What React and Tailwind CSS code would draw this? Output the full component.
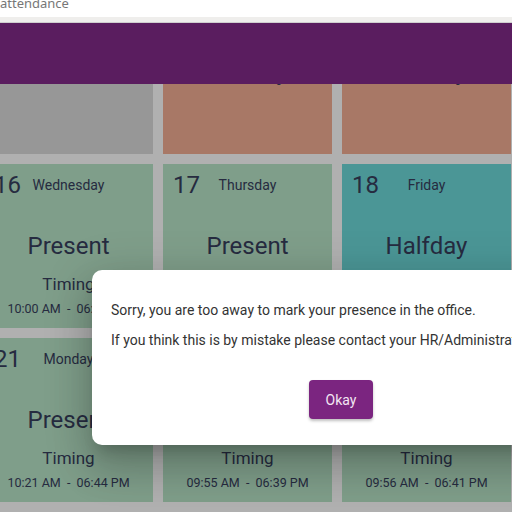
import React from "react";

const days = [
  { num: "11", day: "Friday", status: "Absent", bg: "bg-[#979797]", timing: false },
  { num: "12", day: "Saturday", status: "Holiday", bg: "bg-[#a87866]", timing: false },
  { num: "13", day: "Sunday", status: "Holiday", bg: "bg-[#a87866]", timing: false },
  { num: "16", day: "Wednesday", status: "Present", bg: "bg-[#7f9e8a]", timing: true, from: "10:00 AM", to: "06:42 PM" },
  { num: "17", day: "Thursday", status: "Present", bg: "bg-[#7f9e8a]", timing: true, from: "09:58 AM", to: "06:40 PM" },
  { num: "18", day: "Friday", status: "Halfday", bg: "bg-[#4b9696]", timing: true, from: "10:05 AM", to: "02:10 PM" },
  { num: "21", day: "Monday", status: "Present", bg: "bg-[#7f9e8a]", timing: true, from: "10:21 AM", to: "06:44 PM" },
  { num: "22", day: "Tuesday", status: "Present", bg: "bg-[#7f9e8a]", timing: true, from: "09:55 AM", to: "06:39 PM" },
  { num: "23", day: "Wednesday", status: "Present", bg: "bg-[#7f9e8a]", timing: true, from: "09:56 AM", to: "06:41 PM" },
];

const DayCard = ({ item }) => (
  <div className={`${item.bg} h-[164px] flex flex-col text-[#262b40]`}>
    <div className="grid grid-cols-[1fr_auto_1fr] items-center pt-[9px] h-[33px]">
      <span className="pl-[10px] text-[24px] leading-[24px]">{item.num}</span>
      <span className="text-[14px] leading-[22px]">{item.day}</span>
      <span />
    </div>
    <div className="mt-[34px] text-center text-[24px] leading-[30px]">{item.status}</div>
    {item.timing && (
      <>
        <div className="mt-[11px] text-center text-[17px] leading-[24px]">Timing</div>
        <div className="mt-[4px] text-center text-[12.5px] leading-[18px] whitespace-pre">
          {item.from}  -  {item.to}
        </div>
      </>
    )}
  </div>
);

const App = () => {
  return (
    <div className="w-[512px] h-[512px] overflow-hidden relative flex flex-col bg-white font-['Roboto',sans-serif]">
      {/* window title strip */}
      <div className="h-[17px] bg-white overflow-hidden shrink-0">
        <div className="-mt-[4px] text-[13px] leading-[14px] text-[#777] font-['Noto_Sans',sans-serif]">
          attendance
        </div>
      </div>
      <div className="h-[5px] bg-[#efeeec] border-b border-[#cfcfcf] shrink-0 box-content" />

      {/* page */}
      <div className="relative flex-1 bg-[#b0b0b0] overflow-hidden">
        <header className="absolute top-0 left-0 right-0 h-[61px] bg-[#5a1d5f] z-10" />

        <div className="-mt-[33px] -ml-[16px] grid grid-cols-[169px_169px_169px_169px] gap-[10px]">
          {days.map((d, i) => (
            <React.Fragment key={d.num}>
              <DayCard item={d} />
              {i % 3 === 2 && <div />}
            </React.Fragment>
          ))}
        </div>

        {/* alert dialog */}
        <div className="absolute left-[92px] top-[247px] w-[498px] z-20 bg-white rounded-[10px] shadow-[0_11px_15px_-7px_rgba(0,0,0,0.2),0_24px_38px_3px_rgba(0,0,0,0.14),0_9px_46px_8px_rgba(0,0,0,0.12)] pt-[30px] pb-[26px] pl-[19px] text-[14px] leading-[20px] text-[#333]">
          <p className="whitespace-nowrap">Sorry, you are too away to mark your presence in the office.</p>
          <p className="mt-[10px] whitespace-nowrap">
            If you think this is by mistake please contact your HR/Administrator.
          </p>
          <div className="mt-[30px] flex justify-center -ml-[19px]">
            <button className="w-[64px] h-[39px] rounded-[4px] bg-[#7b2580] text-[#f3e6f3] text-[14px] shadow-[0_2px_3px_rgba(0,0,0,0.25)]">
              Okay
            </button>
          </div>
        </div>
      </div>
    </div>
  );
};

export default App;
